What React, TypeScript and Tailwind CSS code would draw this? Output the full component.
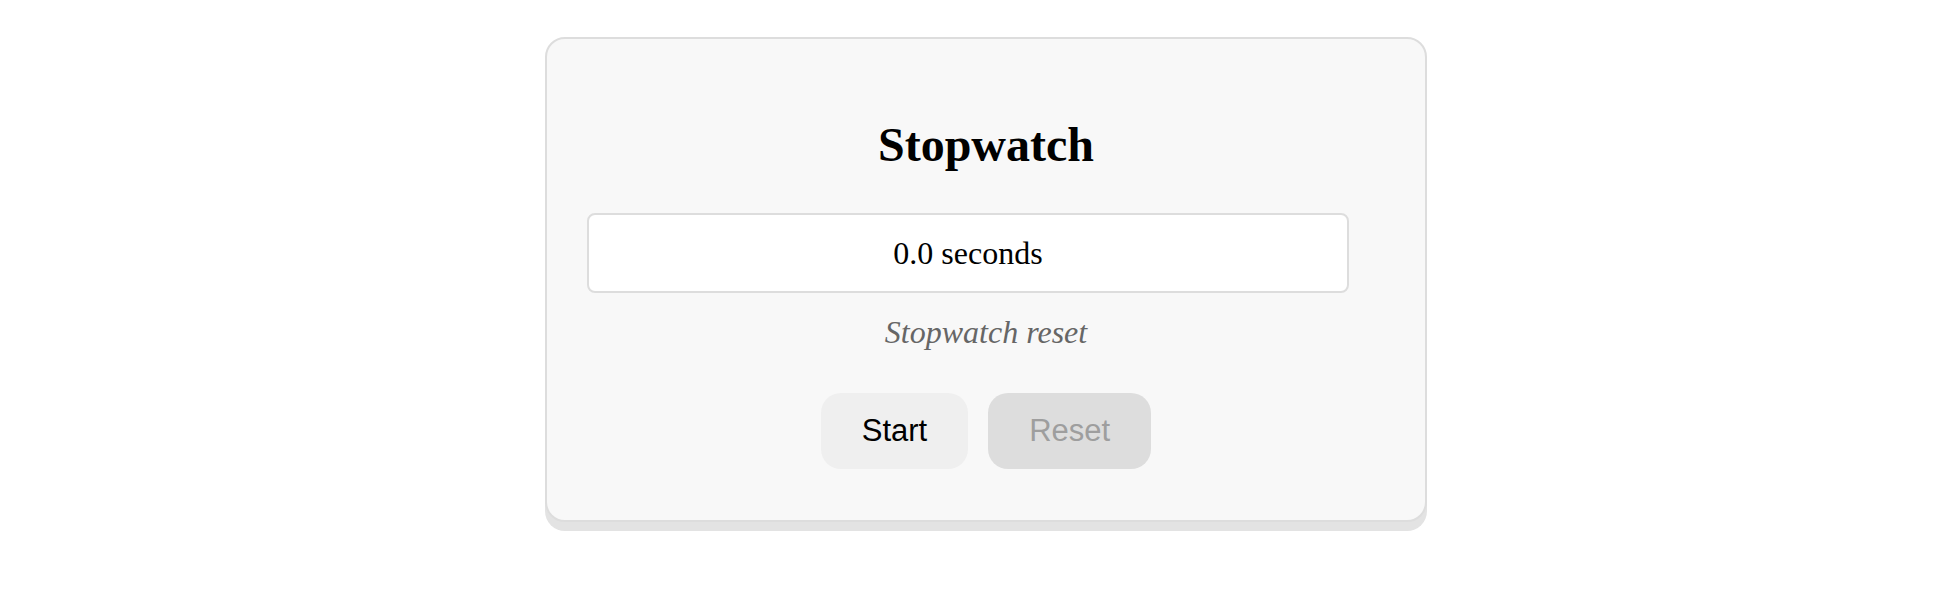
import React, { useState } from 'react';

export default function App() {
  const [running, setRunning] = useState(false);
  const [elapsed] = useState(0);

  const serif = { fontFamily: '"Liberation Serif", "Times New Roman", serif' };

  return (
    <div className="min-h-[606px] bg-white flex justify-center pl-[34px] pt-[37px]">
      <div className="w-[882px] h-fit bg-[#f8f8f8] border-2 border-[#dddddd] rounded-[20px] shadow-[0_9px_0_#e3e3e3] pt-[82px] pb-[51px]">
        <h1 className="text-center text-[48px] leading-none font-bold text-black" style={serif}>
          Stopwatch
        </h1>

        <div className="mt-[44px] ml-[40px] w-[762px] h-[80px] bg-white border-2 border-[#dddddd] rounded-[8px] flex items-center justify-center">
          <span className="text-[32px] leading-[37px] text-black" style={serif}>
            {elapsed.toFixed(1)} seconds
          </span>
        </div>

        <p className="mt-[21px] text-center text-[32px] leading-[37px] italic text-[#666666]" style={serif}>
          Stopwatch reset
        </p>

        <div
          className="mt-[42px] flex justify-center gap-5"
          style={{ fontFamily: '"Liberation Sans", Arial, sans-serif' }}
        >
          <button
            onClick={() => setRunning(!running)}
            className="h-[76px] px-[41px] rounded-[20px] bg-[#efefef] text-black text-[31px] leading-[36px]"
          >
            {running ? 'Stop' : 'Start'}
          </button>
          <button
            disabled
            className="h-[76px] px-[41px] rounded-[20px] bg-[#dddddd] text-[#9e9e9e] text-[31px] leading-[36px]"
          >
            Reset
          </button>
        </div>
      </div>
    </div>
  );
}
